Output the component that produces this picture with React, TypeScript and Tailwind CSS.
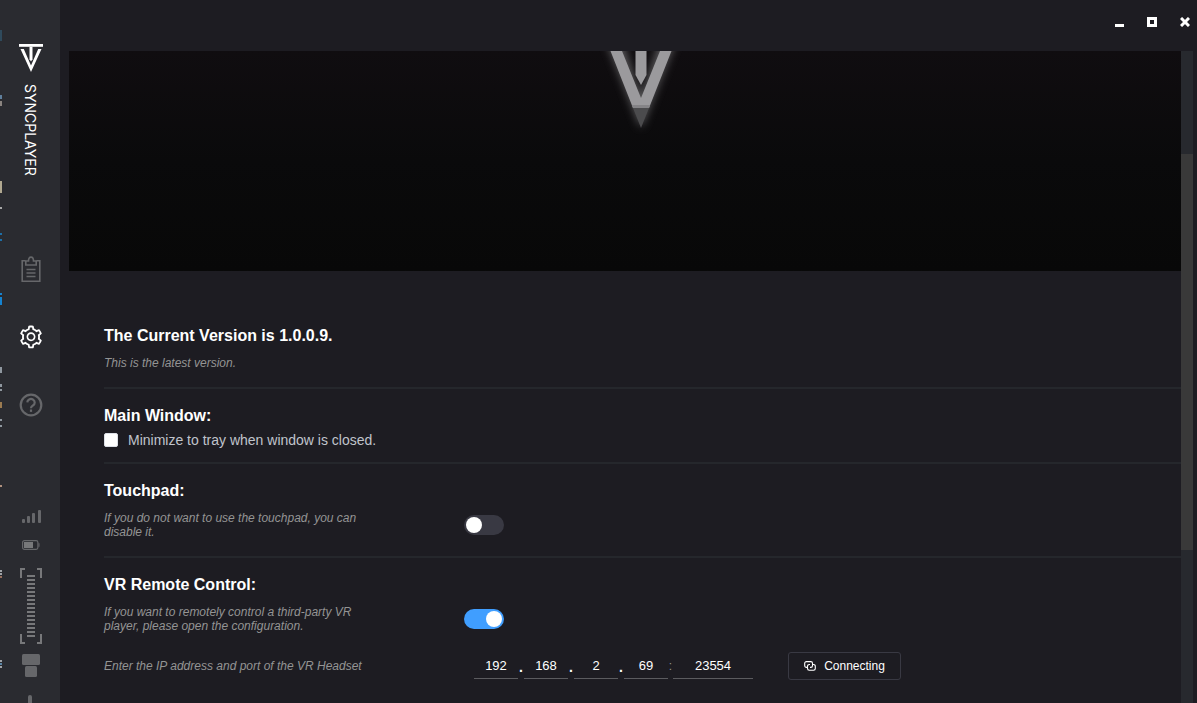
import type { ReactElement } from "react";
import { useState } from "react";
import { AiOutlineSetting } from "react-icons/ai";

type PageId = "playlist" | "settings" | "help";

// Slivers of the window behind, visible along the left edge.
const EDGE_MARKS = [
  { y: 30, h: 11, color: "#2f4a5c" },
  { y: 95, h: 4, color: "#5f7f9c" },
  { y: 101, h: 5, color: "#8a8480" },
  { y: 181, h: 12, color: "#b0a890" },
  { y: 207, h: 2, color: "#a8a8a8" },
  { y: 233, h: 2, color: "#1d6fa8" },
  { y: 239, h: 2, color: "#1d6fa8" },
  { y: 293, h: 2, color: "#1583d0" },
  { y: 297, h: 8, color: "#1583d0" },
  { y: 367, h: 6, color: "#8f979f" },
  { y: 384, h: 3, color: "#8f979f" },
  { y: 389, h: 2, color: "#8f979f" },
  { y: 402, h: 6, color: "#9a7a50" },
  { y: 419, h: 2, color: "#8f979f" },
  { y: 425, h: 2, color: "#8f979f" },
  { y: 485, h: 2, color: "#b0917e" },
  { y: 570, h: 2, color: "#a0a4a8" },
  { y: 573, h: 2, color: "#a0a4a8" },
  { y: 576, h: 2, color: "#96705e" },
  { y: 660, h: 2, color: "#a0a4a8" },
  { y: 663, h: 2, color: "#5a86a8" },
  { y: 666, h: 2, color: "#a0a4a8" },
];

function BrandMark() {
  return (
    <svg width="24" height="28" viewBox="0 0 24 28" fill="#fff" aria-hidden="true">
      <path d="M0 0h24v2.800H0z" />
      <path d="M1.500 5h3.300L12 21.500 19.200 5h3.300L12 28z" />
      <path d="M10.500 2.800h3v12.500L12 17.500l-1.500-2.200z" />
    </svg>
  );
}

function ClipboardIcon() {
  return (
    <svg width="20" height="27" viewBox="0 0 20 27" fill="none" stroke="currentColor" strokeWidth="1.600" aria-hidden="true">
      <path d="M4.500 4.800H1.200v20.400h17.600V4.800h-3.300" />
      <path d="M4.800 9V5h2.700c0-2.400.8-3.900 2.500-3.900s2.500 1.500 2.500 3.900h2.700v4z" />
      <path d="M5.500 13.500h9M5.500 17h9M5.500 20.500h9" />
    </svg>
  );
}

function HelpIcon() {
  return (
    <svg width="24" height="24" viewBox="0 0 24 24" fill="none" stroke="currentColor" strokeWidth="2.200" aria-hidden="true">
      <circle cx="12" cy="12" r="10.300" />
      <path d="M8.300 9.400a3.700 3.500 0 1 1 5.600 3.100c-1.200.7-1.900 1.200-1.900 2.700" />
      <path d="M12 16.500v2.400" />
    </svg>
  );
}

function SignalIcon() {
  return (
    <svg width="20" height="14" viewBox="0 0 20 14" fill="#66676a" aria-hidden="true">
      <rect x="1" y="9" width="3" height="4" rx="1" />
      <rect x="6" y="6" width="3" height="7" rx="1" />
      <rect x="11" y="3" width="3" height="10" rx="1" />
      <rect x="17" y="0" width="3" height="13" rx="1" />
    </svg>
  );
}

function BatteryIcon() {
  return (
    <svg width="18" height="10" viewBox="0 0 18 10" aria-hidden="true">
      <rect x=".6" y=".6" width="15.300" height="8.800" rx="1.800" fill="none" stroke="#66676a" strokeWidth="1.200" />
      <rect x="2" y="2" width="9" height="6" fill="#77787a" />
      <path d="M16.500 3.200h1v3.600h-1z" fill="#66676a" />
    </svg>
  );
}

function StrokeRange() {
  return (
    <svg width="22" height="76" viewBox="0 0 22 76" aria-hidden="true">
      <path d="M1 10V1h4M17 1h4v9M1 66v9h4M17 75h4v-9" fill="none" stroke="#77787a" strokeWidth="2" />
      <path d="M11 7v62" stroke="#77787a" strokeWidth="8" strokeDasharray="2 2" />
    </svg>
  );
}

function DeviceIcon() {
  return (
    <svg width="18" height="50" viewBox="0 0 18 50" fill="#66676a" aria-hidden="true">
      <rect x="0" y="0" width="18" height="11" rx="1.500" />
      <rect x="3" y="12" width="12" height="11" rx="1.500" />
      <rect x="6" y="41" width="4" height="20" rx="2" />
    </svg>
  );
}

function LinkSquaresIcon() {
  return (
    <svg width="12" height="12" viewBox="0 0 12 12" fill="none" stroke="currentColor" strokeWidth="1.100" aria-hidden="true">
      <path d="M3.600 7.400H2.400A1.700 1.700 0 0 1 .7 5.700V3.300a1.700 1.700 0 0 1 1.700-1.700h4.400a1.700 1.700 0 0 1 1.700 1.700v2.400a1.700 1.700 0 0 1-1.700 1.700H6" />
      <path d="M8.800 4.500h.8a1.700 1.700 0 0 1 1.700 1.700v2.400a1.700 1.700 0 0 1-1.700 1.700H5.200a1.700 1.700 0 0 1-1.700-1.700V6.200a1.700 1.700 0 0 1 1.700-1.700H6" />
    </svg>
  );
}

const NAV: { id: PageId; label: string; icon: ReactElement }[] = [
  { id: "playlist", label: "Playlist", icon: <ClipboardIcon /> },
  { id: "settings", label: "Settings", icon: <AiOutlineSetting size={26} /> },
  { id: "help", label: "Help", icon: <HelpIcon /> },
];

function Sidebar({ page, onSelect }: { page: PageId; onSelect: (id: PageId) => void }) {
  return (
    <aside className="relative flex w-[60px] shrink-0 flex-col items-center overflow-hidden bg-[#2a2b30] pl-0.5">
      <svg className="absolute left-0 top-0" width="2" height="703" aria-hidden="true">
        {EDGE_MARKS.map((m) => (
          <rect key={m.y} x="0" y={m.y} width="2" height={m.h} fill={m.color} />
        ))}
      </svg>
      <div className="flex h-[235px] shrink-0 flex-col items-center gap-3 pt-11">
        <BrandMark />
        <span className="pr-0.5 font-['Inter',sans-serif] text-[14px] leading-4 text-white [writing-mode:vertical-rl]">
          SYNCPLAYER
        </span>
      </div>
      <nav className="flex shrink-0 flex-col">
        {NAV.map((item) => (
          <button
            key={item.id}
            type="button"
            aria-label={item.label}
            onClick={() => onSelect(item.id)}
            className={`flex h-[68px] w-14 items-center justify-center ${
              page === item.id ? "text-white" : "text-[#66676a]"
            }`}
          >
            {item.icon}
          </button>
        ))}
      </nav>
      <div className="flex shrink-0 flex-col items-center pt-[71px]">
        <SignalIcon />
        <div className="pt-4">
          <BatteryIcon />
        </div>
        <div className="pt-[18px]">
          <StrokeRange />
        </div>
        <div className="pt-[10px]">
          <DeviceIcon />
        </div>
      </div>
    </aside>
  );
}

function TitleBar() {
  return (
    <header className="flex h-[51px] shrink-0 items-center justify-end gap-[9px] pb-[7px] text-white">
      <button type="button" aria-label="Minimize" className="flex h-6 w-6 items-center justify-center">
        <svg width="10" height="10" viewBox="0 0 10 10" fill="currentColor">
          <path d="M1 7h9v3H1z" />
        </svg>
      </button>
      <button type="button" aria-label="Maximize" className="flex h-6 w-6 items-center justify-center">
        <svg width="10" height="10" viewBox="0 0 10 10" fill="none" stroke="currentColor" strokeWidth="3">
          <path d="M1.500 1.500h7v7h-7z" />
        </svg>
      </button>
      <button type="button" aria-label="Close" className="flex h-6 w-6 items-center justify-center">
        <svg width="10" height="10" viewBox="0 0 10 10" stroke="currentColor" strokeWidth="3">
          <path d="M1 1l8 8M9 1L1 9" />
        </svg>
      </button>
    </header>
  );
}

function Banner() {
  return (
    <div className="flex h-[220px] justify-center overflow-hidden bg-linear-to-b from-[#100d10] via-[#0a0a0b] to-[#080808] pl-8">
      <svg width="160" height="120" viewBox="-80 0 160 120" aria-hidden="true">
        <defs>
          <filter id="glow" x="-50%" y="-50%" width="200%" height="200%">
            <feGaussianBlur stdDeviation="5" />
          </filter>
        </defs>
        <path
          d="M-34 -9h15L0 47 19 -9h15L0 77z"
          fill="#8a8a8c"
          opacity=".65"
          filter="url(#glow)"
        />
        <path d="M-30.500 0h11.500L0 47 19 0h11.500L8 57H-8z" fill="#9b9a9d" />
        <path d="M-5.500 0h11v24L0 34l-5.500-10z" fill="#9b9a9d" />
        <path d="M-9.200 54H9.200L8 57H-8z" fill="#858487" />
        <path d="M-8 57H8L0 77z" fill="#4b4b4d" />
      </svg>
    </div>
  );
}

function Switch({ label, checked, onChange }: { label: string; checked: boolean; onChange: (v: boolean) => void }) {
  return (
    <input
      type="checkbox"
      role="switch"
      aria-label={label}
      checked={checked}
      onChange={(e) => onChange(e.target.checked)}
      className="flex h-5 w-10 appearance-none items-center rounded-full bg-[#393943] px-0.5 before:h-4 before:w-4 before:rounded-full before:bg-white checked:justify-end checked:bg-[#409eff]"
    />
  );
}

const TITLE = "text-[16px] font-bold leading-6 text-white";
const HINT = "max-w-[260px] text-[12px] italic leading-[14px] text-[#949494]";
const SECTION = "border-b-2 border-[#25272c] pt-[15px]";
const FIELD = "h-[26px] border-b border-[#5b5b5f] bg-transparent text-center text-[13px] text-white outline-none";

function AddressFields() {
  const [octets, setOctets] = useState(["192", "168", "2", "69"]);
  const [port, setPort] = useState("23554");

  return (
    <div className="flex items-center pl-[10px]">
      {octets.map((value, i) => (
        <div key={i} className="flex items-center">
          <input
            aria-label={`IP address part ${i + 1}`}
            value={value}
            onChange={(e) => setOctets(octets.map((o, n) => (n === i ? e.target.value : o)))}
            className={`w-11 ${FIELD}`}
          />
          {i < 3 ? (
            <span className="w-1.5 pt-0.5 text-center text-[14px] font-bold leading-5 text-white">.</span>
          ) : (
            <span className="w-[5px] text-center text-[12px] leading-5 text-[#949494]">:</span>
          )}
        </div>
      ))}
      <input
        aria-label="Port"
        value={port}
        onChange={(e) => setPort(e.target.value)}
        className={`w-20 ${FIELD}`}
      />
      <button
        type="button"
        className="ml-[35px] flex h-7 w-[113px] items-center justify-center gap-2 rounded-[3px] border border-[#393943] text-[12px] font-medium text-white"
      >
        <LinkSquaresIcon />
        Connecting
      </button>
    </div>
  );
}

function SettingsPage() {
  const [minimize, setMinimize] = useState(false);
  const [touchpad, setTouchpad] = useState(false);
  const [remote, setRemote] = useState(true);

  return (
    <div className="pl-[35px]">
      <section className="border-b-2 border-[#25272c] pb-[17px] pt-[53px]">
        <h2 className={TITLE}>The Current Version is 1.0.0.9.</h2>
        <p className={`mt-2 ${HINT}`}>This is the latest version.</p>
      </section>

      <section className={`pb-3 ${SECTION}`}>
        <h2 className={TITLE}>Main Window:</h2>
        <label className="mt-0.5 flex items-center gap-[10px] text-[14px] leading-5 text-[#c0c4cc]">
          <input
            type="checkbox"
            checked={minimize}
            onChange={(e) => setMinimize(e.target.checked)}
            className="h-3.5 w-3.5 appearance-none rounded-[2px] border border-[#dcdfe6] bg-white checked:bg-[#409eff]"
          />
          Minimize to tray when window is closed.
        </label>
      </section>

      <section className={`pb-[17px] ${SECTION}`}>
        <h2 className={TITLE}>Touchpad:</h2>
        <div className="mt-2 grid grid-cols-[360px_1fr] items-center">
          <p className={HINT}>If you do not want to use the touchpad, you can disable it.</p>
          <Switch label="Touchpad" checked={touchpad} onChange={setTouchpad} />
        </div>
      </section>

      <section className="pt-[15px]">
        <h2 className={TITLE}>VR Remote Control:</h2>
        <div className="mt-2 grid grid-cols-[360px_1fr] items-center">
          <p className={HINT}>
            If you want to remotely control a third-party VR player, please open the configuration.
          </p>
          <Switch label="VR Remote Control" checked={remote} onChange={setRemote} />
        </div>
        <div className="mt-[19px] grid grid-cols-[360px_1fr] items-center">
          <p className={HINT}>Enter the IP address and port of the VR Headset</p>
          <AddressFields />
        </div>
      </section>
    </div>
  );
}

export default function App() {
  const [page, setPage] = useState<PageId>("settings");

  return (
    <div className="flex h-screen overflow-hidden bg-[#1d1c22] font-['Liberation_Sans',Arial,sans-serif]">
      <Sidebar page={page} onSelect={setPage} />
      <div className="flex min-w-0 flex-1 flex-col">
        <TitleBar />
        <div className="flex min-h-0 flex-1 pl-[9px] pr-1">
          <main className="min-w-0 flex-1 overflow-hidden">
            <Banner />
            <SettingsPage />
          </main>
          {/* Scrollbar */}
          <div className="w-3 shrink-0 bg-[#27292e] pt-[103px]">
            <div className="h-[396px] bg-[#393939]" />
          </div>
        </div>
      </div>
    </div>
  );
}
